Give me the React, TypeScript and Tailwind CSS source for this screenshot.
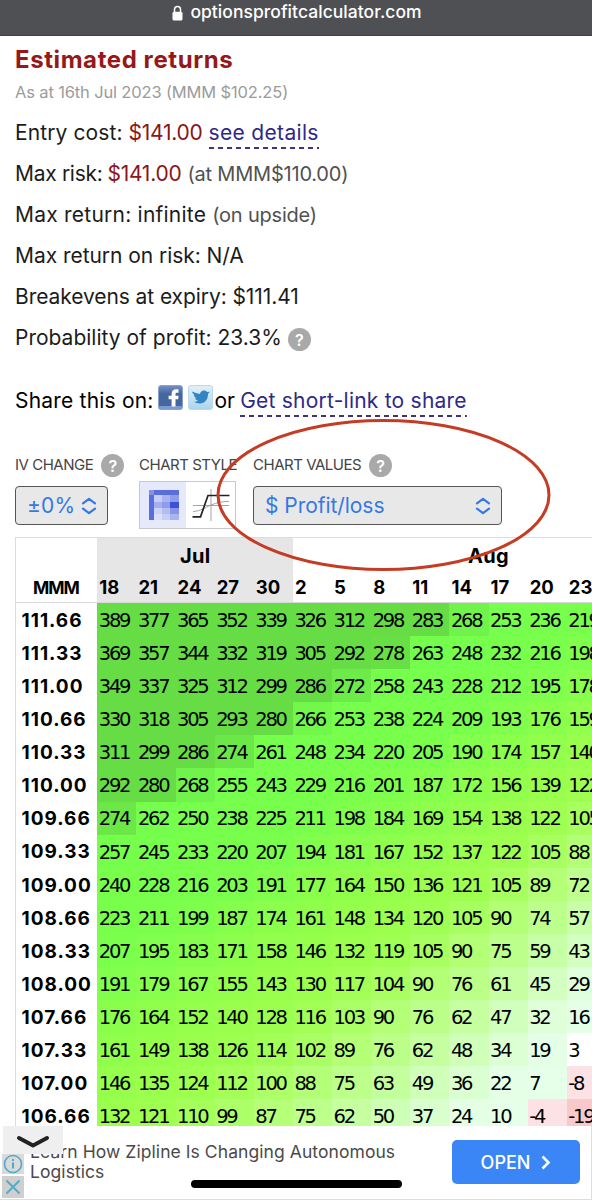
import React from "react";

const DAYS = ["18", "21", "24", "27", "30", "2", "5", "8", "11", "14", "17", "20", "23"];

const ROWS: [string, number[]][] = [
  ["111.66", [389, 377, 365, 352, 339, 326, 312, 298, 283, 268, 253, 236, 219]],
  ["111.33", [369, 357, 344, 332, 319, 305, 292, 278, 263, 248, 232, 216, 198]],
  ["111.00", [349, 337, 325, 312, 299, 286, 272, 258, 243, 228, 212, 195, 178]],
  ["110.66", [330, 318, 305, 293, 280, 266, 253, 238, 224, 209, 193, 176, 159]],
  ["110.33", [311, 299, 286, 274, 261, 248, 234, 220, 205, 190, 174, 157, 140]],
  ["110.00", [292, 280, 268, 255, 243, 229, 216, 201, 187, 172, 156, 139, 122]],
  ["109.66", [274, 262, 250, 238, 225, 211, 198, 184, 169, 154, 138, 122, 105]],
  ["109.33", [257, 245, 233, 220, 207, 194, 181, 167, 152, 137, 122, 105, 88]],
  ["109.00", [240, 228, 216, 203, 191, 177, 164, 150, 136, 121, 105, 89, 72]],
  ["108.66", [223, 211, 199, 187, 174, 161, 148, 134, 120, 105, 90, 74, 57]],
  ["108.33", [207, 195, 183, 171, 158, 146, 132, 119, 105, 90, 75, 59, 43]],
  ["108.00", [191, 179, 167, 155, 143, 130, 117, 104, 90, 76, 61, 45, 29]],
  ["107.66", [176, 164, 152, 140, 128, 116, 103, 90, 76, 62, 47, 32, 16]],
  ["107.33", [161, 149, 138, 126, 114, 102, 89, 76, 62, 48, 34, 19, 3]],
  ["107.00", [146, 135, 124, 112, 100, 88, 75, 63, 49, 36, 22, 7, -8]],
  ["106.66", [132, 121, 110, 99, 87, 75, 62, 50, 37, 24, 10, -4, -19]],
];

const STOPS: [number, number[]][] = [
  [-19, [248, 200, 203]],
  [-8, [252, 226, 228]],
  [-4, [252, 226, 228]],
  [3, [255, 255, 255]],
  [7, [229, 255, 232]],
  [22, [229, 255, 230]],
  [34, [220, 255, 212]],
  [48, [208, 255, 186]],
  [62, [197, 255, 160]],
  [76, [187, 255, 137]],
  [90, [179, 255, 117]],
  [105, [168, 255, 96]],
  [122, [158, 255, 80]],
  [140, [153, 255, 76]],
  [170, [140, 255, 76]],
  [210, [121, 255, 76]],
  [262, [117, 255, 76]],
  [268, [112, 244, 75]],
  [274, [107, 231, 72]],
  [280, [102, 221, 68]],
];

function shade(v: number): string {
  const last = STOPS[STOPS.length - 1];
  if (v >= last[0]) return `rgb(${last[1].join(",")})`;
  for (let i = 1; i < STOPS.length; i++) {
    const [b, cb] = STOPS[i];
    if (v <= b) {
      const [a, ca] = STOPS[i - 1];
      const t = Math.max(0, (v - a) / (b - a));
      return `rgb(${ca.map((c, k) => Math.round(c + (cb[k] - c) * t)).join(",")})`;
    }
  }
  return "white";
}

function Help({ className = "" }: { className?: string }) {
  return (
    <span
      className={`inline-flex h-[23px] w-[23px] shrink-0 items-center justify-center rounded-full bg-[#a9a9a9] text-[16px] leading-none font-semibold tracking-normal text-white ${className}`}
    >
      ?
    </span>
  );
}

function UpDown() {
  return (
    <svg width="16" height="18" viewBox="0 0 16 18" fill="none" stroke="#3478e5" strokeWidth="2.2" strokeLinecap="round" strokeLinejoin="round">
      <path d="M2 6.3 8 1.8l6 4.5M2 11.7l6 4.5 6-4.5" />
    </svg>
  );
}

function FacebookIcon() {
  return (
    <svg width="25" height="25" viewBox="0 0 25 25">
      <defs>
        <linearGradient id="fb" x1="0" y1="0" x2="0" y2="1">
          <stop offset="0" stopColor="#7591c2" />
          <stop offset="0.35" stopColor="#44669f" />
          <stop offset="1" stopColor="#4467a6" />
        </linearGradient>
      </defs>
      <rect x="0.5" y="0.5" width="24" height="24" rx="2.5" fill="url(#fb)" stroke="#8aa3cc" />
      <rect x="1" y="21" width="23" height="3" rx="1" fill="#7d9cce" />
      <path d="M20.500 4.200h-2.200c-3 0-4.700 1.700-4.700 4.500v2.100h-3v3.500h3v7.200h3.900v-7.200h2.700l.4-3.500h-3.100V9.200c0-.9.4-1.400 1.400-1.400h1.600z" fill="#fff" />
    </svg>
  );
}

function TwitterIcon() {
  return (
    <svg width="25" height="25" viewBox="0 0 25 25">
      <defs>
        <linearGradient id="tw" x1="0" y1="0" x2="0" y2="1">
          <stop offset="0" stopColor="#e2f1f8" />
          <stop offset="1" stopColor="#abd5ec" />
        </linearGradient>
      </defs>
      <rect x="0.5" y="0.5" width="24" height="24" rx="2.5" fill="url(#tw)" stroke="#bcd9e8" />
      <path d="M4 6.500c2.500 1.100 5 2 8 2.600.2-1.900 1.600-3.600 4-3.700 1.400 0 2.400.6 3.100 1.500l2.700-.2-1.800 2.200c.2 5-3 9.300-8 9.500-2.200.1-4.200-.4-5.800-1.600 1.700 0 3-.5 3.900-1.300-1.700-.3-2.600-1.100-3.100-2.300h1.500c-1.600-.8-2.500-1.800-2.700-3.400l1.400.4C5.500 9.100 4.300 8.200 4 6.500z" fill="#3484c4" />
    </svg>
  );
}

const GRID_X = [0, 5, 13, 21, 30];
const GRID_Y = [0, 5, 12, 18, 24, 30];
const GRID = [
  ["#8390e5", "#5a6ddd", "#5a6ddd", "#5a6ddd"],
  ["#5a6ddd", "#c6cdf6", "#a9b3ef", "#8f9cea"],
  ["#5a6ddd", "#a5afee", "#8f9cea", "#3a51d8"],
  ["#5a6ddd", "#cdd3f7", "#b4bdf2", "#8795e8"],
  ["#5a6ddd", "#dbe0fa", "#c6cdf6", "#a9b3ef"],
];

function GridIcon() {
  return (
    <svg width="30" height="30" viewBox="0 0 30 30" shapeRendering="crispEdges">
      {GRID.map((row, r) =>
        row.map((c, i) => (
          <rect key={`${r}-${i}`} x={GRID_X[i]} y={GRID_Y[r]} width={GRID_X[i + 1] - GRID_X[i]} height={GRID_Y[r + 1] - GRID_Y[r]} fill={c} />
        ))
      )}
    </svg>
  );
}

function LineIcon() {
  return (
    <svg width="38" height="34" viewBox="0 0 38 34" fill="none">
      <path d="M19 1v32M1 17.500h36" stroke="#999" strokeWidth="0.9" />
      <path d="M1 23.500c8-.5 12-4 18-6.500s11-3.500 18-3.500" stroke="#999" strokeWidth="0.9" />
      <path d="M.5 28.800h8L16 7.500h21.500" stroke="#222" strokeWidth="1.700" />
    </svg>
  );
}

const line = "flex h-[41px] items-center whitespace-pre";
const muted = "ml-[6px] text-[20px] tracking-[-0.2px] text-[#515151]";
const price = "tracking-[-0.25px] text-[#8b1517]";
const link =
  "bg-[repeating-linear-gradient(90deg,#3b3580_0px,#3b3580_5px,transparent_5px,transparent_9px)] bg-[length:100%_2px] bg-bottom bg-no-repeat pt-[4px] pb-[4px] leading-[24px] text-[#2f2889]";

export default function App() {
  return (
    <div className="relative flex h-[1200px] w-[592px] flex-col overflow-hidden bg-white font-['Inter',sans-serif] text-[21px] text-[#1c1c1c]">
      <header className="flex h-[36px] shrink-0 justify-center border-b border-[#3f4043] bg-[#4f5054] pt-px text-white">
        <div className="flex h-[23px] items-center gap-[7px] pl-[2px]">
          <svg width="11" height="16" viewBox="0 0 11 16">
            <path d="M2.500 8V4.500a3 3 0 0 1 6 0V8" fill="none" stroke="#fff" strokeWidth="1.500" />
            <rect x="0.500" y="6.800" width="10" height="8.700" rx="1.500" fill="#fff" />
          </svg>
          <span className="text-[17.500px] font-medium tracking-[0.040px]">optionsprofitcalculator.com</span>
        </div>
      </header>

      <main className="flex h-[1090px] shrink-0 flex-col overflow-hidden pl-[15px]">
        <h1 className="mt-[7px] flex h-[34px] shrink-0 items-center text-[24px] font-bold tracking-[0.580px] text-[#96191a]">Estimated returns</h1>
        <p className="mt-[2px] flex h-[26px] shrink-0 items-center text-[16.500px] tracking-[-0.150px] text-[#9b9b9b]">As at 16th Jul 2023 (MMM $102.25)</p>

        <section className="mt-[7px] flex shrink-0 flex-col">
          <p className={`${line} tracking-[0.100px]`}>
            Entry cost:<span className={`${price} ml-[6px]`}>$141.00</span>
            <a className={`${link} ml-[6px] tracking-[0.330px]`}>see details</a>
          </p>
          <p className={`${line} tracking-[-0.300px]`}>
            Max risk:<span className={`${price} ml-[5px]`}>$141.00</span>
            <span className={muted}>(at MMM$110.00)</span>
          </p>
          <p className={`${line} tracking-[0.230px]`}>
            Max return: infinite<span className={muted}>(on upside)</span>
          </p>
          <p className={`${line} tracking-[-0.050px]`}>Max return on risk: N/A</p>
          <p className={`${line} tracking-[-0.080px]`}>Breakevens at expiry: $111.41</p>
          <p className={`${line} tracking-[0px]`}>
            Probability of profit: 23.3%
            <Help className="mt-[4px] ml-[6px]" />
          </p>
        </section>

        <section className="mt-[22px] flex h-[41px] shrink-0 items-center whitespace-pre tracking-[0.200px] text-black">
          Share this on:
          <span className="mb-[6px] ml-[4px] flex gap-[5px]">
            <FacebookIcon />
            <TwitterIcon />
          </span>
          <span className="ml-[2px] tracking-[-0.300px]">or </span>
          <a className={`${link} tracking-[0.230px]`}>Get short-link to share</a>
        </section>

        <section className="mt-[33px] flex h-[83px] shrink-0 text-[15px] tracking-[-0.480px] text-[#444]">
          <div className="flex w-[124px] flex-col">
            <div className="flex h-[23px] items-center gap-[8px]">
              <span>IV CHANGE</span>
              <Help />
            </div>
            <div className="mt-[9px] flex h-[39px] w-[93px] shrink-0 items-center justify-between rounded-[4px] border border-[#555] bg-[#e8e8e8] pr-[10px] pl-[11px] text-[21px] tracking-[0.200px] text-[#3478e5]">
              <span>±0%</span>
              <UpDown />
            </div>
          </div>
          <div className="flex w-[114px] flex-col">
            <div className="flex h-[23px] items-center">CHART STYLE</div>
            <div className="mt-[4px] flex h-[48px] w-[97px] shrink-0 border border-[#c9c9c9]">
              <div className="flex w-[46px] items-center justify-center bg-[#e6e9fa] pl-px">
                <GridIcon />
              </div>
              <div className="flex flex-1 items-center justify-center">
                <LineIcon />
              </div>
            </div>
          </div>
          <div className="flex flex-col">
            <div className="flex h-[23px] items-center gap-[8px]">
              <span>CHART VALUES</span>
              <Help />
            </div>
            <div className="mt-[9px] flex h-[39px] w-[249px] shrink-0 items-center justify-between rounded-[4px] border border-[#555] bg-[#e8e8e8] pr-[10px] pl-[11px] text-[21px] tracking-[-0.050px] text-[#3478e5]">
              <span>$ Profit/loss</span>
              <UpDown />
            </div>
          </div>
        </section>

        <section className="w-[591px] shrink-0 border-t border-l border-[#dcdcdc]">
          <div className="grid h-[65px] grid-cols-[81.300px_195.700px_314px] grid-rows-[34px_31px] border-b border-[#d8d8d8] text-[19px] font-bold text-black">
            <div className="row-span-2 flex items-end pb-[2px] pl-[17px] text-[17.500px] tracking-[-1px]">MMM</div>
            <div className="flex items-center justify-center bg-[#e6e6e6] pt-[2px] text-[20px] tracking-[0.300px]">Jul</div>
            <div className="flex items-center pt-[2px] pl-[175px] text-[20px] tracking-[0.300px]">Aug</div>
            <div className="col-span-2 flex text-[18.500px]">
              {DAYS.map((d, i) => (
                <div key={d} className={`flex h-[30px] w-[39.140px] shrink-0 items-center pt-[2px] pl-[2px] ${i < 5 ? "bg-[#e6e6e6]" : ""}`}>
                  {d}
                </div>
              ))}
            </div>
          </div>
          {ROWS.map(([strike, values]) => (
            <div key={strike} className="flex h-[33.100px]">
              <div className="flex w-[81.300px] shrink-0 items-center pt-[3px] pl-[5.500px] text-[19px] font-bold tracking-[1px] text-black">{strike}</div>
              {values.map((v, i) => (
                <div
                  key={i}
                  className="flex w-[39.140px] shrink-0 items-center pt-[2px] pl-[1.500px] font-['DejaVu_Sans',sans-serif] text-[19.500px] tracking-[-2.300px] text-black"
                  style={{ backgroundColor: shade(v) }}
                >
                  {v}
                </div>
              ))}
            </div>
          ))}
        </section>
      </main>

      <footer className="relative flex h-[74px] shrink-0 items-start border-r border-b border-[#dedede] bg-white">
        <p className="mt-[16px] ml-[30px] w-[422px] text-[17.500px] leading-[20px] tracking-[0.070px] text-[#4a4a4a]">
          Learn How Zipline Is Changing Autonomous
          <br />
          Logistics
        </p>
        <div className="mt-[14px] flex h-[44px] w-[128px] items-center justify-center gap-[11px] rounded-[5px] bg-[#3b86f7] text-[18px] font-medium text-white">
          OPEN
          <svg width="10" height="15" viewBox="0 0 10 15" fill="none" stroke="#fff" strokeWidth="2.600">
            <path d="M1.500 1.500 7.500 7.500 1.500 13.500" />
          </svg>
        </div>
        <div className="absolute top-0 left-[3px] flex h-[28px] w-[60px] items-center justify-center bg-[#efefef] pt-[3px]">
          <svg width="34" height="14" viewBox="0 0 34 14" fill="none" stroke="#222" strokeWidth="4" strokeLinecap="round" strokeLinejoin="round">
            <path d="M3 3 17 10.500 31 3" />
          </svg>
        </div>
        <div className="absolute top-[28px] left-[2px] flex w-[22px] flex-col gap-[2px]">
          <div className="flex h-[20px] items-center justify-center bg-[#dadada]">
            <svg width="20" height="20" viewBox="0 0 20 20" fill="none" stroke="#4fabc9" strokeWidth="1.600">
              <circle cx="10" cy="10" r="8.500" />
              <path d="M10 8.500v6M10 5v2" strokeWidth="2" />
            </svg>
          </div>
          <div className="flex h-[22px] items-center justify-center bg-[#cfcfcf]">
            <svg width="16" height="16" viewBox="0 0 16 16" fill="none" stroke="#4fabc9" strokeWidth="1.800">
              <path d="M1.500 1.500l13 13M14.500 1.500l-13 13" />
            </svg>
          </div>
        </div>
        <div className="absolute top-[54px] left-[191px] h-[8px] w-[211px] rounded-full bg-black" />
      </footer>

      <svg className="pointer-events-none absolute top-[415px] left-[212px]" width="344" height="160" viewBox="0 0 344 160" fill="none">
        <ellipse cx="171.500" cy="80" rx="165.500" ry="74.500" stroke="#c43c24" strokeWidth="3" />
      </svg>
    </div>
  );
}
